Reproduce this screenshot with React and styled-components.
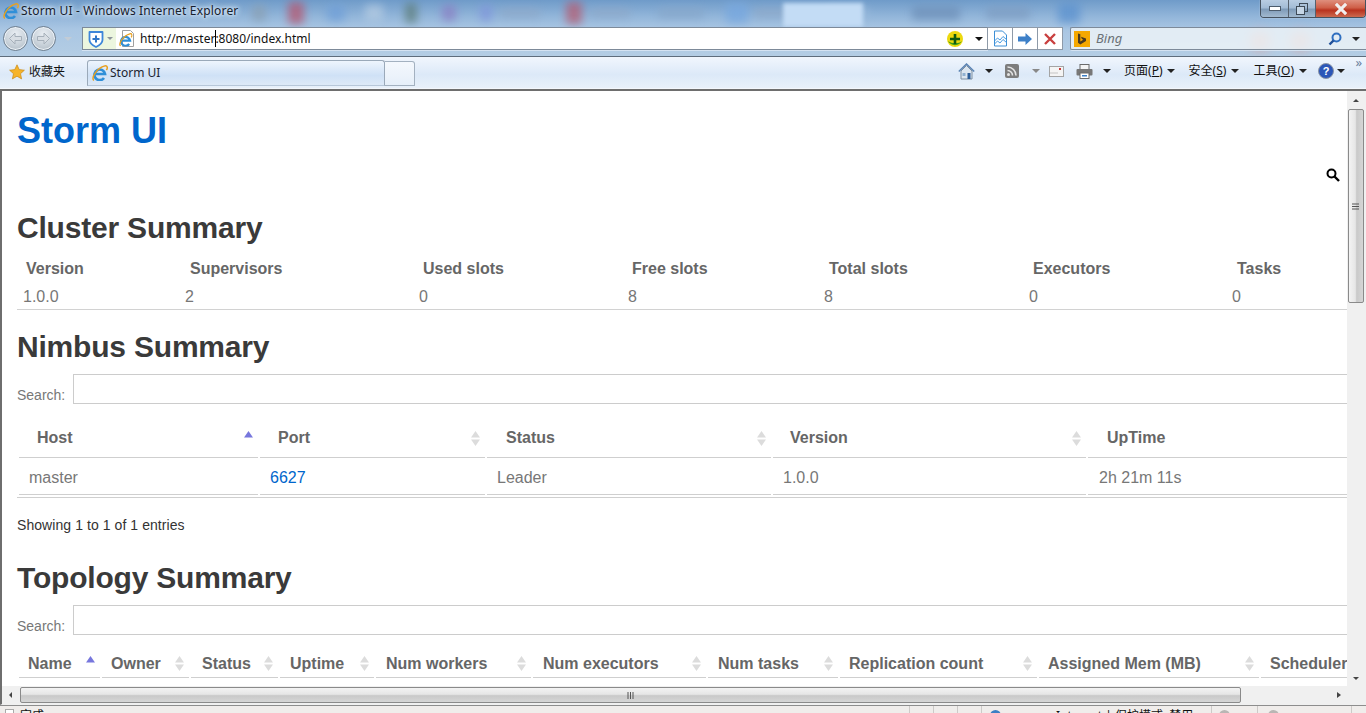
import React from "react";
import styled, { createGlobalStyle } from "styled-components";

const Global = createGlobalStyle`
  html, body { margin: 0; padding: 0; height: 100%; overflow: hidden; background: #fff; }
  * { box-sizing: border-box; }
`;

const UI = `"Noto Sans", "Noto Sans CJK SC", sans-serif`;
const PAGE = `"Liberation Sans", Arial, sans-serif`;

const Win = styled.div`
  width: 1366px; height: 713px; overflow: hidden; display: flex; flex-direction: column;
  background: #fff; font-family: ${PAGE};
`;

/* ---------- window frame ---------- */
const Frame = styled.header`
  position: relative; height: 57px; flex: none; overflow: hidden;
  background: linear-gradient(180deg, #6f9bc9 0%, #93b6da 30%, #a9c6e3 52%, #b4cde4 100%);
  border-bottom: 1px solid #5f6d7c;
`;
const BlurStrip = styled.div`
  position: absolute; left: 240px; top: 0; height: 26px; width: 1126px;
  display: flex; align-items: center; filter: blur(4px); opacity: .75;
`;
const BlurItem = styled.span`
  display: block; flex: none; width: ${p => p.$w}px; height: ${p => p.$h || 16}px;
  margin-left: ${p => p.$m}px; background: ${p => p.$c}; border-radius: 2px;
`;
const ActiveGlow = styled.div`
  position: absolute; left: 783px; top: 3px; width: 80px; height: 24px;
  background: #c3dcf5; filter: blur(2px);
`;
const Smear = styled.div`
  position: absolute; left: 1200px; top: 26px; width: 130px; height: 30px; filter: blur(6px);
  display: flex; gap: 20px; justify-content: flex-end; padding: 6px 20px 0 0;
`;
const SmearDot = styled.span`
  display: block; width: 20px; height: 18px; border-radius: 50%; background: #d9a5a0;
`;
const TitleBar = styled.div`
  position: relative; height: 25px; display: flex; align-items: flex-start; padding: 3px 0 0 3px; gap: 2px;
`;
const TitleText = styled.span`
  font: 12px/16px ${UI}; color: #16202c; letter-spacing: .175px;
  text-shadow: 0 0 6px #dfeeff, 0 0 6px #dfeeff, 0 0 3px #dfeeff;
`;
const WinButtons = styled.div`
  position: absolute; right: 0; top: 0; width: 106px; height: 18px; display: flex;
  border: 1px solid #46525f; border-top: 0; border-radius: 0 0 4px 4px; overflow: hidden;
  box-shadow: 0 0 1px #fff;
`;
const WinBtn = styled.div`
  display: flex; align-items: center; justify-content: center; width: ${p => p.$w}px; flex: none;
  border-right: ${p => p.$last ? 0 : "1px solid #56616e"};
  background: ${p => p.$close
    ? "linear-gradient(180deg,#df8f7d 0%,#cf5f48 45%,#b9331f 60%,#cc6a4f 100%)"
    : "linear-gradient(180deg,#b9cde2 0%,#a3bcd6 45%,#7f9bb8 55%,#a2b9cf 100%)"};
`;
const NavRow = styled.div`
  position: relative; height: 31px; display: flex; align-items: flex-start; padding-top: 1px;
`;
const NavCircles = styled.div`
  width: 82px; flex: none; display: flex; align-items: center; padding-left: 3px; gap: 3px; height: 25px;
`;
const Round = styled.div`
  width: 25px; height: 25px; border-radius: 50%; border: 1px solid #6f7f8f; flex: none;
  display: flex; align-items: center; justify-content: center;
  background: radial-gradient(circle at 50% 30%, #e9eef3 0%, #c9d2da 55%, #aab5bf 100%);
  box-shadow: inset 0 0 0 1px #eef3f8;
`;
const AddressBox = styled.div`
  width: 906px; height: 23px; flex: none; display: flex; align-items: center; background: #fff;
  border: 1px solid #7d8a99; border-right-color: #8e9aa8; margin-top: 1px; box-shadow: 0 1px 0 #d5e3f2;
`;
const Shield = styled.div`
  width: 33px; height: 100%; flex: none; display: flex; align-items: center; padding-left: 5px; gap: 3px;
  background: #ecf6df;
`;
const AddressText = styled.span`
  font: 12px/21px ${UI}; color: #111; margin-left: 5px; flex: 1; white-space: nowrap;
`;
const Cursor = styled.i`
  display: inline-block; width: 1px; height: 17px; background: #000; margin-right: -1px; vertical-align: -4px;
`;
const NavBtn = styled.div`
  width: 25px; height: 23px; flex: none; background: #fff; display: flex; align-items: center; justify-content: center;
  border: 1px solid #8e9aa8; border-left: 0; margin-top: 1px;
  &:last-of-type { border-radius: 0 2px 2px 0; width: 26px; }
`;
const SearchBox = styled.div`
  position: relative; flex: 1; height: 23px; margin: 1px 0 0 7px; display: flex; align-items: center;
  padding-left: 3px; background: rgba(238,244,248,.82); border: 1px solid #7d8a99; border-right: 0;
  border-radius: 2px 0 0 2px; box-shadow: 0 1px 0 #d5e3f2;
`;
const BingWord = styled.span`
  font: italic 13px/21px ${UI}; color: #6b7276; margin-left: 6px; flex: 1;
`;

/* ---------- tab/tool row ---------- */
const TabRow = styled.div`
  height: 34px; flex: none; display: flex; align-items: flex-end; position: relative;
  background: linear-gradient(180deg, #f1f6fd 0%, #dce9f8 55%, #e9f1fa 100%);
  border-bottom: 2px solid #6e6e6e;
  box-shadow: inset 0 -1px 0 #f3f7fc;
`;
const Fav = styled.div`
  width: 87px; flex: none; height: 26px; margin-bottom: 4px; display: flex; align-items: center; padding-left: 9px; gap: 4px;
  font: 12px/14px ${UI}; color: #111;
`;
const Tab = styled.div`
  width: 298px; height: 26px; flex: none; display: flex; align-items: center; padding: 0 0 1px 4px; gap: 2px;
  margin-bottom: 3px;
  border: 1px solid #9aa9b9; border-bottom-color: #b7c7d9; border-radius: 3px 3px 0 0;
  background: linear-gradient(180deg, #eef5fd 0%, #cfe1f6 60%, #dde9f7 100%);
  font: 12px/14px ${UI}; color: #1b2430;
`;
const NewTab = styled.div`
  width: 30px; height: 25px; flex: none; margin-bottom: 3px;
  border: 1px solid #a3b1c0; border-left: 0; border-radius: 0 3px 0 0;
  background: linear-gradient(180deg, #f4f8fd 0%, #e6eff9 100%);
`;
const Tools = styled.div`
  margin-left: auto; margin-bottom: 5px; display: flex; align-items: center; height: 26px; padding-right: 18px; position: relative;
  font: 12px/14px ${UI}; color: #111;
`;
const ToolLabel = styled.span`
  margin-left: ${p => p.$m}px; white-space: nowrap;
  u { text-underline-offset: 1px; }
`;
const Tri = styled.span`
  display: inline-block; width: 0; height: 0; flex: none; margin-left: ${p => p.$m || 0}px; margin-right: ${p => p.$r || 0}px;
  border-left: ${p => p.$s || 4}px solid transparent; border-right: ${p => p.$s || 4}px solid transparent;
  border-top: ${p => p.$s || 4}px solid ${p => p.$c || "#222"};
`;
const IconSlot = styled.span`
  display: inline-flex; flex: none; margin-left: ${p => p.$m || 0}px;
`;
const More = styled.span`
  position: absolute; right: 4px; top: -2px; font: 13px/12px ${UI}; color: #6a7f9c;
`;

/* ---------- page ---------- */
const Body = styled.div`
  flex: 1; min-height: 0; display: flex; border-left: 2px solid #6e6e6e;
`;
const Viewport = styled.main`
  flex: 1; min-width: 0; overflow: hidden; padding-left: 15px; background: #fff;
`;
const Page = styled.div`
  width: 1600px;
`;
const Brand = styled.h1`
  margin: 20px 0 0; font: bold 36px/40px ${PAGE}; color: #0066cc;
`;
const SearchIconRow = styled.div`
  width: 1323px; height: 24px; margin-top: 12px; display: flex; justify-content: flex-end; align-items: center;
`;
const Heading = styled.h2`
  margin: ${p => p.$top}px 0 0; font: bold 30px/33px ${PAGE}; color: #3a3a3a; letter-spacing: -.2px;
`;
const ClusterHead = styled.div`
  display: grid; grid-template-columns: 162px 234px 209px 196px 205px 203px 200px;
  margin: 11px 0 0 1px; height: 28px; align-items: center;
`;
const ClusterTh = styled.div`
  font: bold 16px/20px ${PAGE}; color: #666; padding-left: ${p => p.$pad}px; white-space: nowrap;
`;
const ClusterRow = styled(ClusterHead)`
  margin-top: 0; margin-left: 0; padding: 2px 0 0 1px; height: 27px; border-bottom: 1px solid #d2d2d2; width: 1330px;
`;
const Td = styled.div`
  font: 16px/20px ${PAGE}; color: #777; padding-left: ${p => p.$pad}px; white-space: nowrap;
`;
const SearchLine = styled.label`
  display: flex; align-items: flex-end; margin-top: ${p => p.$top}px; font: 14px/18px ${PAGE}; color: #777;
`;
const SearchInput = styled.input`
  width: 1500px; height: 30px; margin-left: 8px; border: 1px solid #ccc; background: #fff; padding: 0; outline: 0;
`;
const Grid = styled.div`
  display: grid; grid-template-columns: ${p => p.$cols}; column-gap: 2px; margin: ${p => p.$top || 0}px 0 0 2px;
`;
const Th = styled.div`
  display: flex; justify-content: space-between; align-items: flex-start; height: ${p => p.$h}px;
  padding: ${p => p.$pt}px 5px 0 ${p => p.$pad}px; border-bottom: 1px solid #cfcfcf;
  font: bold 16px/20px ${PAGE}; color: #666; white-space: nowrap;
`;
const Sort = styled.svg`
  width: 9px; height: 15px; flex: none; margin-top: ${p => p.$mt}px;
`;
const Cell = styled.div`
  height: ${p => p.$h}px; border-bottom: 1px solid #cfcfcf; padding: 10px 0 0 ${p => p.$pad}px;
  font: 16px/20px ${PAGE}; color: #777;
`;
const PortLink = styled.a`
  color: #0066cc; text-decoration: none;
`;
const TableEnd = styled.div`
  width: 1500px; margin-top: 2px; border-top: 1px solid #cfcfcf;
`;
const Info = styled.div`
  margin-top: 18px; font: 14px/18px ${PAGE}; color: #333; letter-spacing: .07px;
`;

/* ---------- scrollbars and status ---------- */
const VBar = styled.div`
  width: 19px; flex: none; display: flex; flex-direction: column; align-items: center; background: #f0f0f0;
`;
const VThumb = styled.div`
  width: 16px; height: 194px; margin: 7px 2px 0 0; display: flex; align-items: center; justify-content: center;
  border: 1px solid #8a8a8a; border-radius: 2px;
  background: linear-gradient(90deg, #f3f3f3 0%, #e6e6e6 45%, #c9c9c9 55%, #d6d6d6 100%);
`;
const Arrow = styled.span`
  display: block; width: 0; height: 0; margin: ${p => p.$m};
  border-left: 3px solid transparent; border-right: 3px solid transparent;
  ${p => p.$up ? "border-bottom: 3px solid #444;" : "border-top: 3px solid #444;"}
`;
const HBar = styled.div`
  height: 19px; flex: none; display: flex; align-items: center; background: #f0f0f0;
  border-left: 2px solid #6e6e6e; border-bottom: 1px solid #f0f0f0;
`;
const HThumb = styled.div`
  width: 1221px; height: 16px; margin-left: 8px; display: flex; align-items: center; justify-content: center;
  border: 1px solid #8a8a8a; border-radius: 2px;
  background: linear-gradient(180deg, #f3f3f3 0%, #e6e6e6 45%, #c9c9c9 55%, #d6d6d6 100%);
`;
const HArrow = styled.span`
  display: block; width: 0; height: 0; margin: ${p => p.$m}; flex: none;
  border-top: 3px solid transparent; border-bottom: 3px solid transparent;
  ${p => p.$left ? "border-right: 3px solid #444;" : "border-left: 4px solid #444;"}
`;
const Status = styled.footer`
  height: 8px; flex: none; overflow: hidden; display: flex; align-items: flex-start;
  border-top: 1px solid #8d8d8d; background: #f0edeb; font: 12px/14px ${UI}; color: #111; position: relative;
`;
const StatusBox = styled.span`
  display: block; flex: none; width: 9px; height: 12px; margin: 3px 4px 0 5px; border: 1px solid #aaa; background: #fff;
`;
const StatusSeg = styled.span`
  display: flex; flex: none; width: ${p => p.$w}px; height: 8px; border-right: 1px solid #cdcac8;
  padding: 3px 0 0 ${p => p.$pad || 0}px; white-space: nowrap;
`;
const StatusDot = styled.i`
  display: block; flex: none; width: 11px; height: 11px; border-radius: 50%; margin: 1px ${p => p.$r || 0}px 0 0;
  background: ${p => p.$c};
`;

/* ---------- icons ---------- */
const IE = ({ s = 16 }) => (
  <svg width={s} height={s} viewBox="0 0 16 16">
    <path d="M3.800 9H13A5.300 5.300 0 1 0 12 13" fill="none" stroke="#2f8fd8" strokeWidth="2.700" />
    <path d="M1.800 15.400C-1 12.500 5 3 12.800 .9c2.600-.5 3.200 1.700 1.600 4.300" fill="none" stroke="#e8a020" strokeWidth="1.500" />
  </svg>
);
const PageIE = () => (
  <svg width="16" height="18" viewBox="0 0 16 18">
    <path d="M3.500 .5h8l3 3v13h-11z" fill="#fff" stroke="#a0a0a0" />
    <g transform="translate(0 3) scale(.85)"><IE /></g>
  </svg>
);
const ShieldIcon = () => (
  <svg width="16" height="18" viewBox="0 0 16 18">
    <path d="M1.500 2h13v8c0 3.500-3.500 5.500-6.500 7C5 15.500 1.500 13.500 1.500 10z" fill="#fff" stroke="#3d86d9" strokeWidth="1.800" strokeLinejoin="round" />
    <path d="M8 5.500v7M4.500 9h7" stroke="#2f76c8" strokeWidth="2" />
  </svg>
);
const BackArrow = ({ flip }) => (
  <svg width="15" height="13" viewBox="0 0 15 13" style={flip ? { transform: "scaleX(-1)" } : undefined}>
    <path d="M7 1 1.500 6.500 7 12V8.500h6.500v-4H7z" fill="#d8dee4" stroke="#a6b0ba" />
  </svg>
);
const Plus360 = () => (
  <svg width="18" height="18" viewBox="0 0 18 18">
    <circle cx="9" cy="9" r="8" fill="#ecd90f" />
    <path d="M2 11a8 8 0 0 0 14 0c-3 3-10 3-14 0z" fill="#3a9a19" />
    <path d="M9 4v10M4 9h10" stroke="#0f5a12" strokeWidth="2.600" />
  </svg>
);
const Compat = () => (
  <svg width="15" height="17" viewBox="0 0 15 17">
    <path d="M1.500 1h8l4 4v11h-12z" fill="#fff" stroke="#3c8fd6" />
    <path d="M1.500 11l3-3 2.500 2 3-3.500 3.500 3M1.500 14l3-3 2.500 2 3-3.500 3.500 3" fill="none" stroke="#4a9be0" />
  </svg>
);
const Go = () => (
  <svg width="14" height="12" viewBox="0 0 14 12">
    <path d="M7.500 0 14 6l-6.500 6V8.500H0v-5h7.500z" fill="#3d80c8" />
  </svg>
);
const Stop = () => (
  <svg width="12" height="12" viewBox="0 0 12 12">
    <path d="M1 1l10 10M11 1 1 11" stroke="#c9403f" strokeWidth="2.400" />
  </svg>
);
const BingLogo = () => (
  <svg width="16" height="16" viewBox="0 0 16 16">
    <rect width="16" height="16" fill="#f5a800" />
    <path d="M4 2.500l2.300 .8v7.200l3-1.700-1.400-.7-.9-2.300 5 1.800v2.500l-5.700 3.300L4 11.800z" fill="#4a3a20" />
  </svg>
);
const Lens = ({ c = "#2f6fc0" }) => (
  <svg width="14" height="14" viewBox="0 0 14 14">
    <circle cx="8.500" cy="5.500" r="4" fill="none" stroke={c} strokeWidth="2" />
    <path d="M5.500 8.500 1.500 12.500" stroke="#1f4f98" strokeWidth="2.400" />
  </svg>
);
const Star = () => (
  <svg width="16" height="16" viewBox="0 0 16 16">
    <path d="M8 .8l2.200 4.800 5.200.6-3.900 3.500 1.100 5.200L8 12.200l-4.600 2.700 1.100-5.200L.6 6.200l5.200-.6z" fill="#f6b42b" stroke="#c98a18" strokeWidth=".7" />
  </svg>
);
const Home = () => (
  <svg width="17" height="17" viewBox="0 0 17 17">
    <path d="M3 8v8h11V8L8.500 2.500z" fill="#dbe5ef" stroke="#7d8ea0" />
    <path d="M.8 8.500 8.500 1l7.700 7.500" fill="none" stroke="#5b83b3" strokeWidth="1.500" />
    <rect x="9.500" y="10" width="3" height="6" fill="#2c5d97" />
    <rect x="4.500" y="10" width="3" height="3" fill="#8fb0d0" />
  </svg>
);
const Rss = () => (
  <svg width="14" height="14" viewBox="0 0 14 14">
    <rect width="14" height="14" rx="2" fill="#7d7d7d" />
    <circle cx="3.500" cy="10.500" r="1.500" fill="#e4e4e4" />
    <path d="M2.500 6.500a5 5 0 0 1 5 5M2.500 3a8.500 8.500 0 0 1 8.500 8.500" fill="none" stroke="#e4e4e4" strokeWidth="1.600" />
  </svg>
);
const Mail = () => (
  <svg width="15" height="11" viewBox="0 0 15 11">
    <rect x=".5" y=".5" width="14" height="10" fill="#f4f4f4" stroke="#a4a4a4" />
    <path d="M1 7h8" stroke="#c4c4c4" />
    <rect x="10" y="2" width="2" height="2" fill="#c93a3a" />
  </svg>
);
const Printer = () => (
  <svg width="17" height="15" viewBox="0 0 17 15">
    <rect x="4" y=".5" width="9" height="5" fill="#f4f4f4" stroke="#6b6b6b" />
    <rect x=".5" y="5" width="16" height="6.500" rx="1" fill="#777" />
    <rect x="4" y="9" width="9" height="5.500" fill="#fff" stroke="#6b6b6b" />
    <rect x="6" y="11" width="5" height="1.500" fill="#3d80c8" />
  </svg>
);
const Help = () => (
  <svg width="16" height="16" viewBox="0 0 16 16" style={{ fontFamily: "Liberation Sans" }}>
    <circle cx="8" cy="8" r="7.500" fill="#2b56b8" stroke="#8a94a6" />
    <text x="8" y="12" textAnchor="middle" fontSize="11" fontWeight="bold" fill="#fff">?</text>
  </svg>
);
const PageSearch = () => (
  <svg width="14" height="14" viewBox="0 0 14 14">
    <circle cx="5.500" cy="5.500" r="4" fill="none" stroke="#000" strokeWidth="2" />
    <path d="M8.500 8.500 13 13" stroke="#000" strokeWidth="2.400" />
  </svg>
);
const SortIcon = ({ on, mt }) => (
  <Sort $mt={mt} viewBox="0 0 9 15">
    <path d="M4.500 0 9 6.500H0z" fill={on ? "#7777dd" : "#dcdcdc"} />
    {!on && <path d="M4.500 15 9 8.500H0z" fill="#dcdcdc" />}
  </Sort>
);
const Grip = ({ v }) => (
  <svg width={7} height={7} viewBox="0 0 7 7" style={v ? { transform: "rotate(90deg)" } : undefined}>
    <path d="M1 0v7M3.500 0v7M6 0v7" stroke="#555" />
  </svg>
);

/* ---------- data ---------- */
const cluster = [
  ["Version", 8, "1.0.0", 5], ["Supervisors", 10, "2", 5], ["Used slots", 9, "0", 5], ["Free slots", 9, "8", 5],
  ["Total slots", 10, "8", 5], ["Executors", 9, "0", 5], ["Tasks", 10, "0", 5],
];
const nimbus = [
  ["Host", 18, "master", 10], ["Port", 18, "6627", 10], ["Status", 19, "Leader", 10],
  ["Version", 17, "1.0.0", 10], ["UpTime", 19, "2h 21m 11s", 11],
];
const topology = [
  ["Name", 9], ["Owner", 9], ["Status", 11], ["Uptime", 10], ["Num workers", 10], ["Num executors", 10],
  ["Num tasks", 10], ["Replication count", 9], ["Assigned Mem (MB)", 9], ["Scheduler Info", 9],
];
const blurs = [
  [14, "#8aa0b4", 12], [16, "#b5566f", 22, 22], [18, "#6f9fd8", 23], [18, "#b4cbe2", 20], [12, "#5d7d7a", 22, 20], [14, "#8a7fc4", 25],
  [12, "#7f95dc", 24], [40, "#8ea7c6", 8, 8], [16, "#b45c72", 26, 22], [40, "#8ea7c6", 8, 8], [46, "#86a6c9", 28, 10], [22, "#76a7e0", 22, 20], [36, "#8ea7c6", 6, 8],
  [40, "#9bbcdc", 38, 10], [48, "#6d8fb8", 44, 14], [44, "#7d9cc1", 26, 12], [22, "#5c92cf", 28, 20],
];

export default function App() {
  return (
    <Win>
      <Global />
      <Frame>
        <BlurStrip>
          {blurs.map(([w, c, m, h], i) => <BlurItem key={i} $w={w} $c={c} $m={m} $h={h} />)}
        </BlurStrip>
        <ActiveGlow />
        <Smear><SmearDot /><SmearDot /></Smear>
        <TitleBar>
          <IE />
          <TitleText>Storm UI - Windows Internet Explorer</TitleText>
          <WinButtons>
            <WinBtn $w={28}>
              <svg width="12" height="5" viewBox="0 0 12 5"><rect x=".5" y=".5" width="11" height="4" fill="#fff" stroke="#4d5c6c" /></svg>
            </WinBtn>
            <WinBtn $w={27}>
              <svg width="12" height="12" viewBox="0 0 12 12"><rect x="3.500" y=".5" width="8" height="8" fill="none" stroke="#3e4a57" /><rect x=".5" y="3.500" width="8" height="8" fill="#c6d6e6" stroke="#3e4a57" /></svg>
            </WinBtn>
            <WinBtn $w={49} $close $last>
              <svg width="14" height="12" viewBox="0 0 14 12"><path d="M2 1l10 10M12 1 2 11" stroke="#fff" strokeWidth="3" /><path d="M2 1l10 10M12 1 2 11" stroke="#eee" strokeWidth="2" /></svg>
            </WinBtn>
          </WinButtons>
        </TitleBar>
        <NavRow>
          <NavCircles>
            <Round><BackArrow /></Round>
            <Round><BackArrow flip /></Round>
            <Tri $m={5} $c="#c2ccd6" />
          </NavCircles>
          <AddressBox>
            <Shield><ShieldIcon /><Tri $s={3} $c="#8c949c" /></Shield>
            <IconSlot $m={3}><PageIE /></IconSlot>
            <AddressText>http://master<Cursor />:8080/index.html</AddressText>
            <IconSlot><Plus360 /></IconSlot>
            <Tri $m={11} $r={4} $c="#111" />
          </AddressBox>
          <NavBtn><Compat /></NavBtn>
          <NavBtn><Go /></NavBtn>
          <NavBtn><Stop /></NavBtn>
          <SearchBox>
            <BingLogo />
            <BingWord>Bing</BingWord>
            <Lens />
            <Tri $m={10} $r={6} $c="#222" />
          </SearchBox>
        </NavRow>
      </Frame>
      <TabRow>
        <Fav><Star />收藏夹</Fav>
        <Tab><IE /><span>Storm UI</span></Tab>
        <NewTab />
        <Tools>
          <IconSlot><Home /></IconSlot>
          <Tri $m={10} />
          <IconSlot $m={12}><Rss /></IconSlot>
          <Tri $m={13} $c="#888" />
          <IconSlot $m={9}><Mail /></IconSlot>
          <IconSlot $m={12}><Printer /></IconSlot>
          <Tri $m={10} />
          <ToolLabel $m={13}>页面(<u>P</u>)</ToolLabel>
          <Tri $m={4} />
          <ToolLabel $m={14}>安全(<u>S</u>)</ToolLabel>
          <Tri $m={5} />
          <ToolLabel $m={14}>工具(<u>O</u>)</ToolLabel>
          <Tri $m={5} />
          <IconSlot $m={11}><Help /></IconSlot>
          <Tri $m={3} $r={3} />
          <More>»</More>
        </Tools>
      </TabRow>
      <Body>
        <Viewport>
          <Page>
            <Brand>Storm UI</Brand>
            <SearchIconRow><PageSearch /></SearchIconRow>
            <Heading $top={24}>Cluster Summary</Heading>
            <ClusterHead>
              {cluster.map(c => <ClusterTh key={c[0]} $pad={c[1]}>{c[0]}</ClusterTh>)}
            </ClusterHead>
            <ClusterRow>
              {cluster.map(c => <Td key={c[0]} $pad={c[3]}>{c[2]}</Td>)}
            </ClusterRow>
            <Heading $top={20}>Nimbus Summary</Heading>
            <SearchLine $top={11}>Search:<SearchInput /></SearchLine>
            <Grid $top={14} $cols="239px 225px 284px 313px 340px">
              {nimbus.map((n, i) => (
                <Th key={n[0]} $h={40} $pt={10} $pad={n[1]}>
                  {n[0]}<SortIcon on={i === 0} mt={3} />
                </Th>
              ))}
            </Grid>
            <Grid $top={0} $cols="239px 225px 284px 313px 340px">
              {nimbus.map((n, i) => (
                <Cell key={n[0]} $h={37} $pad={n[3]}>
                  {i === 1 ? <PortLink href="#">{n[2]}</PortLink> : n[2]}
                </Cell>
              ))}
            </Grid>
            <TableEnd />
            <Info>Showing 1 to 1 of 1 entries</Info>
            <Heading $top={27}>Topology Summary</Heading>
            <SearchLine $top={11}>Search:<SearchInput /></SearchLine>
            <Grid $top={9} $cols="81px 87px 87px 94px 155px 173px 130px 197px 220px 200px">
              {topology.map(([t, pad], i) => (
                <Th key={t} $h={34} $pt={10} $pad={pad}>
                  {t}{i < 9 && <SortIcon on={i === 0} mt={2} />}
                </Th>
              ))}
            </Grid>
          </Page>
        </Viewport>
        <VBar>
          <Arrow $up $m="8px 2px 0 0" />
          <VThumb><Grip v /></VThumb>
          <Arrow $m="auto 2px 6px 0" />
        </VBar>
      </Body>
      <HBar>
        <HArrow $left $m="0 0 0 7px" />
        <HThumb><Grip /></HThumb>
        <HArrow $m="0 0 0 96px" />
      </HBar>
      <Status>
        <StatusBox /><StatusSeg $w={892} $pad={2}>完成</StatusSeg>
        <StatusSeg $w={24} /><StatusSeg $w={24} /><StatusSeg $w={24} />
        <StatusSeg $w={230} $pad={8}><StatusDot $c="#3b7fc4" $r={55} />Internet | 保护模式: 禁用</StatusSeg>
        <StatusSeg $w={46} $pad={7}><StatusDot $c="#b9b6b4" /></StatusSeg>
        <StatusSeg $w={94} $pad={10}><StatusDot $c="#b9b6b4" /></StatusSeg>
      </Status>
    </Win>
  );
}
